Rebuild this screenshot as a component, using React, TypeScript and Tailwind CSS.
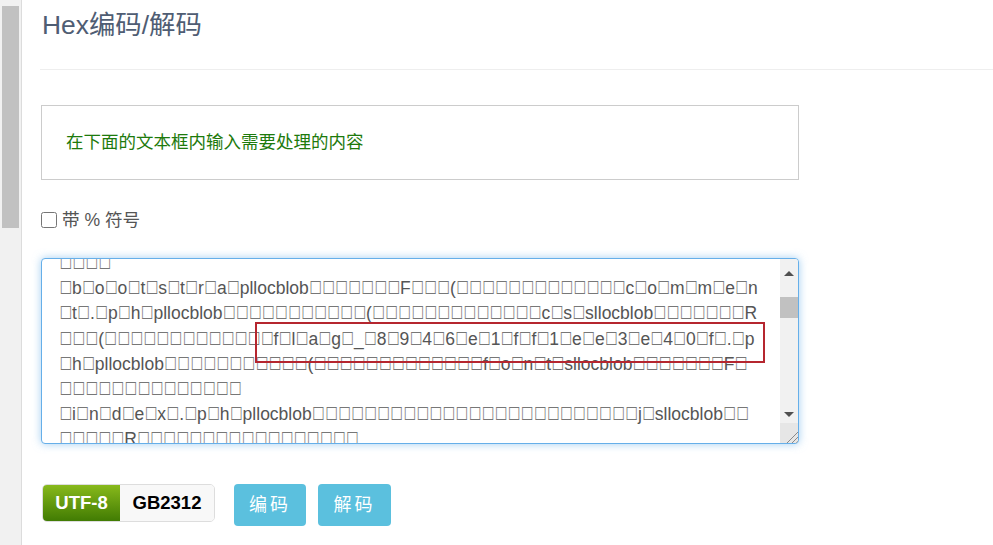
const FONT = "font-['Liberation_Sans','Noto_Sans_CJK_SC',sans-serif]";

const lines = [
  "□□□□",
  "□b□o□o□t□s□t□r□a□pllocblob□□□□□□□F□□□(□□□□□□□□□□□□□c□o□m□m□e□n",
  "□t□.□p□h□pllocblob□□□□□□□□□□□(□□□□□□□□□□□□□c□s□sllocblob□□□□□□□R",
  "□□□(□□□□□□□□□□□□□f□l□a□g□_□8□9□4□6□e□1□f□f□1□e□e□3□e□4□0□f□.□p",
  "□h□pllocblob□□□□□□□□□□□(□□□□□□□□□□□□□f□o□n□t□sllocblob□□□□□□□F□",
  "□□□□□□□□□□□□□□",
  "□i□n□d□e□x□.□p□h□pllocblob□□□□□□□□□□□□□□□□□□□□□□□□□j□sllocblob□□",
  "□□□□□R□□□□□□□□□□□□□□□□□",
];

// the missing-glyph boxes are taller than they are wide, so each square gets stretched
function Line({ text }: { text: string }) {
  return (
    <div className="h-[25.2px] whitespace-nowrap leading-[25.2px]">
      {Array.from(text).map((c, i) =>
        c === "□" ? (
          <span
            key={i}
            className="inline-block w-[13.05px] origin-bottom scale-y-[1.3] text-center font-['DejaVu_Sans'] text-[13px] text-[#777]"
          >
            □
          </span>
        ) : (
          <span key={i}>{c}</span>
        )
      )}
    </div>
  );
}

function Scrollbar() {
  return (
    <div className="flex w-[18px] shrink-0 flex-col bg-[#f1f1f1]">
      <div className="flex h-[20px] shrink-0 items-end justify-center pb-[3px]">
        <div className="h-0 w-0 border-x-[5px] border-b-[5px] border-x-transparent border-b-[#505050]" />
      </div>
      <div className="mt-[18px] h-[21px] bg-[#c1c1c1]" />
      <div className="flex flex-1 items-end justify-center pb-[6px]">
        <div className="h-0 w-0 border-x-[5px] border-t-[5px] border-x-transparent border-t-[#505050]" />
      </div>
      <div className="relative h-[20px] shrink-0 bg-[#e6e6e6]">
        <svg className="absolute bottom-0 right-0" width="14" height="14" viewBox="0 0 14 14">
          <path d="M3 14 14 3M8 14 14 8M12 14 14 12" stroke="#8a8a8a" strokeWidth="1" fill="none" />
        </svg>
      </div>
    </div>
  );
}

export default function App() {
  return (
    <div className={`flex h-[545px] w-[993px] overflow-hidden bg-white ${FONT}`}>
      <div className="w-[22px] shrink-0 border-r border-[#dcdcdc] bg-[#f1f1f1] pl-[2px] pr-[2px] pt-[6px]">
        <div className="h-[222px] bg-[#c1c1c1]" />
      </div>

      <main className="relative flex-1 pl-[19px]">
        <h1 className="pl-[1px] pt-[9px] text-[26.4px] leading-[32px] text-[#4f5d73]">Hex编码/解码</h1>
        <hr className="mt-[28px] -ml-px border-[#eeeeee]" />

        <div className="mt-[35px] flex h-[75px] w-[758px] items-center border border-[#cccccc] pl-[24px] text-[17.5px] text-[#1d7a0c]">
          在下面的文本框内输入需要处理的内容
        </div>

        <label className="mt-[30px] flex h-[20px] items-center text-[17.6px] text-[#555555]">
          <input type="checkbox" className="mr-[5px] h-[16px] w-[16px]" />
          带 % 符号
        </label>

        <div className="mt-[28px] flex h-[186px] w-[758px] overflow-hidden rounded-[4px] border border-[#66afe9] bg-white shadow-[0_0_8px_rgba(102,175,233,0.6)]">
          <div className="-mt-[8px] h-[200px] flex-1 overflow-hidden pl-[17px] text-[17.5px] text-[#555555]">
            {lines.map((l, i) => (
              <Line key={i} text={l} />
            ))}
          </div>
          <Scrollbar />
        </div>

        <div className="mt-[40px] flex items-start pl-[1px]">
          <div className="flex h-[38px] w-[173px] overflow-hidden rounded-[5px] border border-[#dddddd] text-[18.5px] font-bold">
            <div className="-m-px flex w-[79px] items-center justify-center bg-gradient-to-b from-[#8abb1c] to-[#3f7a03] text-white">
              UTF-8
            </div>
            <div className="flex flex-1 items-center justify-center bg-[#f8f8f8] text-black">GB2312</div>
          </div>
          <button className="ml-[19px] h-[42px] w-[72px] rounded-[4px] bg-[#5bc0de] text-[18px] tracking-[3px] text-white">
            编码
          </button>
          <button className="ml-[12px] h-[42px] w-[73px] rounded-[4px] bg-[#5bc0de] text-[18px] tracking-[3px] text-white">
            解码
          </button>
        </div>

        {/* annotation box drawn over the textarea */}
        <div className="absolute left-[233px] top-[322px] h-[41px] w-[510px] border-2 border-[#b5262f]" />
      </main>
    </div>
  );
}
